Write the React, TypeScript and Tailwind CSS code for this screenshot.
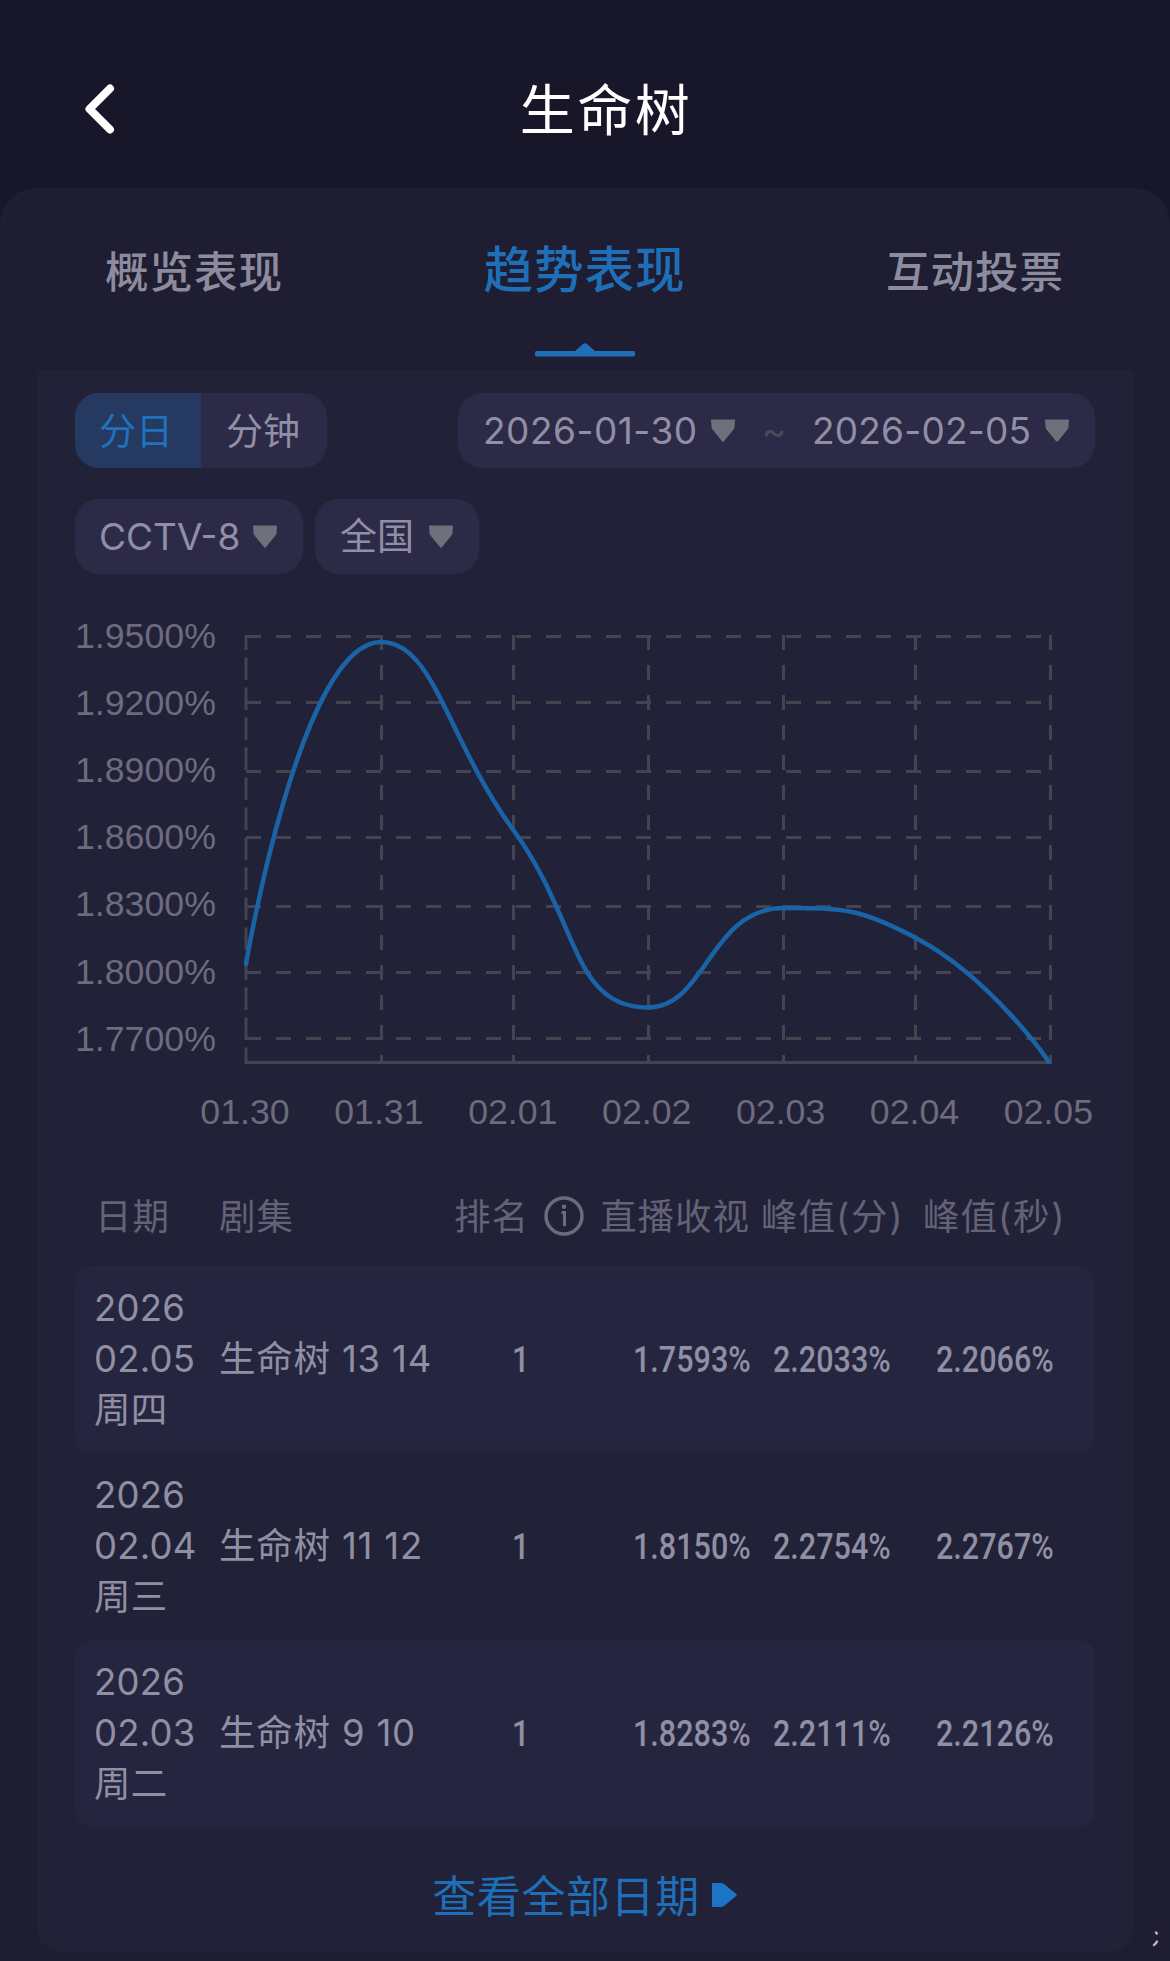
import { clsx } from 'clsx';

type Point = [number, number];

const tabs = ['概览表现', '趋势表现', '互动投票'];

const yLabels = ['1.9500%', '1.9200%', '1.8900%', '1.8600%', '1.8300%', '1.8000%', '1.7700%'];
const xLabels = ['01.30', '01.31', '02.01', '02.02', '02.03', '02.04', '02.05'];
const gridX = [171, 306.5, 438.5, 573.5, 708.5, 840.5, 975.5];
const gridY = [36.5, 102.5, 171.5, 237.5, 306.5, 372.5, 438.5];

const points: Point[] = [
  [171, 364],
  [306, 42],
  [439, 231],
  [573, 407.5],
  [709, 308],
  [841, 338],
  [974, 462],
];

const rows = [
  { year: '2026', date: '02.05', day: '周四', name: '生命树 13 14', rank: 1, live: '1.7593%', minute: '2.2033%', second: '2.2066%' },
  { year: '2026', date: '02.04', day: '周三', name: '生命树 11 12', rank: 1, live: '1.8150%', minute: '2.2754%', second: '2.2767%' },
  { year: '2026', date: '02.03', day: '周二', name: '生命树 9 10', rank: 1, live: '1.8283%', minute: '2.2111%', second: '2.2126%' },
];

const dist = (a: Point, b: Point) => Math.hypot(b[0] - a[0], b[1] - a[1]);
const clamp = (v: number, a: number, b: number) => Math.max(Math.min(a, b), Math.min(Math.max(a, b), v));

// Smooth line through every point, never overshooting its neighbours
const smoothPath = (pts: Point[], smooth = 0.5) => {
  let d = `M${pts[0][0]} ${pts[0][1]}`;
  let out: Point = pts[0];
  for (let i = 1; i < pts.length; i++) {
    const p = pts[i];
    const prev = pts[i - 1];
    const next = pts[i + 1];
    let cpIn: Point = p;
    let cpOut: Point = p;
    if (next) {
      const a = dist(prev, p);
      const b = dist(p, next);
      const ratio = b / (a + b);
      const ox = clamp(p[0] + (next[0] - prev[0]) * smooth * ratio, p[0], next[0]);
      const oy = clamp(p[1] + (next[1] - prev[1]) * smooth * ratio, p[1], next[1]);
      cpIn = [
        clamp(p[0] - ((ox - p[0]) * a) / b, p[0], prev[0]),
        clamp(p[1] - ((oy - p[1]) * a) / b, p[1], prev[1]),
      ];
      cpOut = [p[0] + ((p[0] - cpIn[0]) * b) / a, p[1] + ((p[1] - cpIn[1]) * b) / a];
    }
    d += ` C${out[0]} ${out[1]} ${cpIn[0]} ${cpIn[1]} ${p[0]} ${p[1]}`;
    out = cpOut;
  }
  return d;
};

const Caret = () => (
  <svg className="h-[24px] w-[26px] shrink-0" viewBox="0 0 26 24" fill="#6f707c">
    <path d="M1.500 0.500H24.500Q25 0.500 25 1L24.500 8Q24.300 9.500 23.300 10.800L13.900 22.300Q13 23.300 12.100 22.300L2.700 10.800Q1.700 9.500 1.500 8L1 1Q1 0.500 1.500 0.500Z" />
  </svg>
);

const Header = () => (
  <header className="relative flex h-[188px] items-center justify-center pt-[33px] pl-[42px]">
    <svg className="absolute top-[82px] left-[82px] h-[54px] w-[36px]" viewBox="0 0 36 54" fill="none" stroke="#fff" strokeWidth="8" strokeLinecap="round" strokeLinejoin="round">
      <path d="M28 6.500L7.500 27L28 47.500" />
    </svg>
    <h1 className="text-[55px] leading-none tracking-[2.5px] text-white">生命树</h1>
  </header>
);

const Tabs = () => (
  <nav className="flex h-[182px] justify-between pr-[106px] pl-[105px] pt-[35px] text-[#8d8b9e]">
    {tabs.map((tab, i) => (
      <div
        key={tab}
        className={clsx(
          'flex h-[134px] flex-col items-center font-medium',
          i === 1 ? 'text-[49.5px] leading-[95px] tracking-[1px] text-[#1f6fb8]' : 'text-[43.5px] leading-[98px] tracking-[1px]'
        )}
      >
        {tab}
        {i === 1 && (
          <svg className="mt-[25px] h-[14px] w-[100px]" viewBox="0 0 100 14" fill="#1f6fb8">
            <path d="M1.500 8H40L48 1Q50 -0.500 52 1L60 8H98.500Q100 8 100 9.500V12Q100 13.500 98.500 13.500H1.500Q0 13.500 0 12V9.500Q0 8 1.500 8Z" />
          </svg>
        )}
      </div>
    ))}
  </nav>
);

const Filters = () => (
  <div className="flex flex-col gap-[31px] text-[37px] leading-[75px] text-[#918fa5]">
    <div className="flex justify-between">
      <div className="flex h-[75px] overflow-hidden rounded-[24px] bg-[#2c2a46] leading-[77px]">
        <span className="w-[126px] bg-[#263961] pl-[24px] text-[#1f72bd]">分日</span>
        <span className="w-[126px] pl-[25px]">分钟</span>
      </div>
      <div className="flex h-[75px] w-[637px] items-center rounded-[24px] bg-[#2c2a46] pl-[26px]">
        <span className="w-[226px] -indent-[1px] tracking-[0.5px]">2026-01-30</span>
        <Caret />
        <span className="w-[76px] text-center text-[#4a4a5c]">~</span>
        <span className="w-[232px] tracking-[0.2px]">2026-02-05</span>
        <Caret />
      </div>
    </div>
    <div className="flex gap-[12px]">
      <div className="flex h-[75px] w-[228px] items-center justify-between rounded-[24px] bg-[#2c2a46] pr-[25px] pl-[24px]">
        CCTV-8
        <Caret />
      </div>
      <div className="flex h-[75px] w-[164px] items-center justify-between rounded-[24px] bg-[#2c2a46] pr-[25px] pl-[25px] leading-[77px]">
        全国
        <Caret />
      </div>
    </div>
  </div>
);

const Chart = () => (
  <svg className="mt-[26px] block h-[570px] w-[1020px] overflow-visible" viewBox="0 0 1020 570">
    <g fill="none" stroke="#45434f" strokeWidth="3">
      {gridY.map((y) => (
        <line key={y} x1="171" x2="975" y1={y} y2={y} strokeDasharray="15 15" />
      ))}
      {gridX.map((x, i) => (
        <line
          key={x}
          x1={x}
          x2={x}
          y1="35"
          y2="464"
          strokeDasharray={i === 0 ? '22.5 7.5' : '15 15'}
          strokeDashoffset={i === 0 ? 7.5 : 0}
        />
      ))}
      <line x1="170" x2="977" y1="462.5" y2="462.5" />
    </g>
    <path d={smoothPath(points)} fill="none" stroke="#1a63a6" strokeWidth="4.5" strokeLinecap="round" />
    <g className="font-['Liberation_Sans'] text-[35.7px]" fill="#6d6b7d">
      {yLabels.map((label, i) => (
        <text key={label} x="0" y={47.6 + i * 67.2}>
          {label}
        </text>
      ))}
      {xLabels.map((label, i) => (
        <text key={label} x={170 + i * 133.9} y="524" textAnchor="middle">
          {label}
        </text>
      ))}
    </g>
  </svg>
);

const Num = ({ children }: { children: React.ReactNode }) => (
  <span className="inline-block origin-left scale-x-[0.81] font-['Roboto'] text-[37.7px] font-medium whitespace-nowrap">
    {children}
  </span>
);

const Table = () => (
  <div className="text-[36.5px]">
    <div className="grid h-[96px] grid-cols-[124px_235px_146px_161px_162px_1fr] pl-[20px] leading-[95px] tracking-[1px] text-[#646276]">
      <span>日期</span>
      <span>剧集</span>
      <span className="flex h-[92px] items-center">
        <span className="pt-[2px]">排名</span>
        <svg className="ml-[15px] size-[40px] shrink-0" viewBox="0 0 40 40" fill="none" stroke="#6d6b7a" strokeWidth="3.5">
          <circle cx="20" cy="20" r="18" />
          <path d="M17.500 16.500H20.500V30" strokeWidth="3" />
          <circle cx="20" cy="10.800" r="2.300" fill="#6d6b7a" stroke="none" />
        </svg>
      </span>
      <span className="whitespace-nowrap">直播收视</span>
      <span className="whitespace-nowrap">
        峰值<span className="tracking-[1.7px]">(分)</span>
      </span>
      <span className="whitespace-nowrap">
        峰值<span className="tracking-[1.7px]">(秒)</span>
      </span>
    </div>
    {rows.map((row, i) => (
      <div
        key={row.date}
        className={clsx(
          'grid h-[187px] grid-cols-[125px_293px_121px_140px_163px_1fr] items-center rounded-[16px] pl-[19px] leading-[51px] text-[#918fa3]',
          i % 2 === 0 && 'bg-[#25253f]'
        )}
      >
        <span className="tracking-[0.2px]">
          {row.year}
          <br />
          {row.date}
          <br />
          {row.day}
        </span>
        <span className="tracking-[0.8px] whitespace-nowrap">{row.name}</span>
        <Num>{row.rank}</Num>
        <Num>{row.live}</Num>
        <Num>{row.minute}</Num>
        <Num>{row.second}</Num>
      </div>
    ))}
  </div>
);

const App = () => {
  return (
    <div className="relative h-[1961px] w-[1170px] overflow-hidden bg-[#181629] font-['Inter','Noto_Sans_CJK_SC',sans-serif]">
      <Header />
      <main className="h-[1773px] rounded-t-[36px] bg-[#1f1d31]">
        <Tabs />
        <section className="mx-[37px] h-[1582px] rounded-b-[24px] bg-[#212138] px-[38px] pt-[23px]">
          <Filters />
          <Chart />
          <Table />
          <div className="flex h-[137px] items-center justify-center gap-[12px] text-[44px] tracking-[0.6px] text-[#1f6fb8]">
            <span className="pt-[2px]">查看全部日期</span>
            <svg className="mb-[2px] h-[26px] w-[26px]" viewBox="0 0 26 26" fill="#1c74c4">
              <path d="M0 2Q0 1 1 1H9Q11 1 13 2.800L24.500 12.200Q25.300 13 24.500 13.800L13 23.200Q11 25 9 25H1Q0 25 0 24Z" />
            </svg>
          </div>
        </section>
      </main>
      {/* Edge of the corner stamp */}
      <svg className="absolute right-[11px] bottom-[13px] h-[20px] w-[8px]" viewBox="0 0 8 20" fill="none" stroke="#b9b8c4" strokeWidth="2.500" strokeLinecap="round">
        <path d="M5 4.500L5.800 5.500M6 13.500Q5 15.500 3 17" />
      </svg>
    </div>
  );
};

export default App;
